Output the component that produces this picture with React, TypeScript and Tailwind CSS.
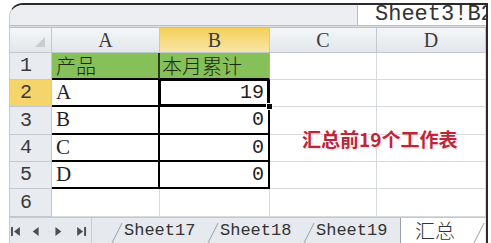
import React from "react";

const mono = { fontFamily: '"Liberation Mono", "DejaVu Sans Mono", monospace' };
const serif = { fontFamily: '"Liberation Serif", "DejaVu Serif", serif' };
const cjk = { fontFamily: '"Noto Sans CJK SC", "Noto Sans", sans-serif' };

function ColHead({ w, label, active }: { w: string; label: string; active?: boolean }) {
  return (
    <div
      className={`${w} h-full flex items-center justify-center border-r border-b border-[#c3c8d0] text-[20px] text-[#3a3a3a] ${
        active ? "bg-gradient-to-b from-[#f5cf55] to-[#f8e6a4]" : "bg-gradient-to-b from-[#f4f6f8] to-[#e3e7ec]"
      }`}
      style={serif}
    >
      {label}
    </div>
  );
}

function RowHead({ n, active }: { n: number; active?: boolean }) {
  return (
    <div
      className={`w-[42px] h-full flex items-center pl-[10px] border-r border-b border-[#c3c8d0] text-[20px] text-[#3a3a3a] ${
        active ? "bg-[#f5d46c]" : "bg-[#e8ecf1]"
      }`}
      style={mono}
    >
      {n}
    </div>
  );
}

function Slash() {
  return (
    <svg width="12" height="26" viewBox="0 0 12 26" className="shrink-0">
      <line x1="1" y1="25" x2="11" y2="5" stroke="#9aa0a8" strokeWidth="1" />
    </svg>
  );
}

export default function App() {
  const rows = [
    { n: 3, a: "B", b: "0", h: "h-[28px]" },
    { n: 4, a: "C", b: "0", h: "h-[27px]" },
    { n: 5, a: "D", b: "0", h: "h-[27px]" },
  ];
  return (
    <div className="w-[491px] h-[243px] bg-white overflow-hidden pt-[3px] pl-[9px]">
      <div className="relative w-[479px] h-[240px] border-t-2 border-r-2 border-l border-t-[#2a2a2a] border-r-[#2a2a2a] border-l-[#c8c8c8] rounded-tl-[14px] overflow-hidden bg-[#eceef1] flex flex-col">
        {/* top bar */}
        <div className="h-[20px] flex shrink-0">
          <div className="flex-1 bg-[#eceef1]" />
          <div className="w-[129px] bg-white border-l border-[#b8bcc4] overflow-hidden whitespace-nowrap pl-[17px] text-[22px] leading-[20px] text-[#333]" style={mono}>
            Sheet3!B2
          </div>
        </div>
        <div className="h-[3px] shrink-0 bg-[#dcdfe4] border-t border-b border-[#b9bec6]" />

        {/* column header */}
        <div className="h-[25px] flex shrink-0">
          <div className="w-[42px] h-full relative border-r border-b border-[#c3c8d0] bg-gradient-to-b from-[#f4f6f8] to-[#e3e7ec]">
            <svg width="10" height="10" className="absolute right-[6px] bottom-[5px]">
              <polygon points="10,0 10,10 0,10" fill="#c9ccd1" />
            </svg>
          </div>
          <ColHead w="w-[108px]" label="A" />
          <ColHead w="w-[110px]" label="B" active />
          <ColHead w="w-[107px]" label="C" />
          <ColHead w="w-[109px]" label="D" />
        </div>

        {/* row 1 */}
        <div className="h-[27px] flex shrink-0 bg-white">
          <RowHead n={1} />
          <div className="w-[108px] h-full bg-[#86c058] border-r-2 border-r-[#2a3a1e] border-b-2 border-b-black pl-[4px] flex items-center text-[20px] font-light text-[#1c2a10]" style={cjk}>
            产品
          </div>
          <div className="w-[110px] h-full bg-[#86c058] border-r border-r-[#9fb98d] border-b-2 border-b-black pl-[2px] flex items-center text-[20px] font-light text-[#1c2a10]" style={cjk}>
            本月累计
          </div>
          <div className="w-[107px] h-full border-r border-b border-[#d6d9de]" />
          <div className="w-[109px] h-full border-r border-b border-[#d6d9de]" />
        </div>

        {/* row 2 */}
        <div className="h-[27px] flex shrink-0 bg-white">
          <RowHead n={2} active />
          <div className="w-[108px] h-full border-r-2 border-r-black border-b-2 border-b-black pl-[4px] flex items-center text-[21px] text-[#222]" style={serif}>
            A
          </div>
          <div className="relative w-[110px] h-full border-r-2 border-r-black border-b-2 border-b-black pr-[4px] flex items-center justify-end text-[20px] text-[#222]" style={mono}>
            <div className="absolute inset-[1px] border border-white outline-2 outline-black pointer-events-none" />
            19
            <div className="absolute right-[-5px] bottom-[-5px] w-[7px] h-[7px] bg-black border border-white z-10" />
          </div>
          <div className="w-[107px] h-full border-r border-b border-[#d6d9de]" />
          <div className="w-[109px] h-full border-r border-b border-[#d6d9de]" />
        </div>

        {rows.map((r) => (
          <div key={r.n} className={`${r.h} flex shrink-0 bg-white`}>
            <RowHead n={r.n} />
            <div className="w-[108px] h-full border-r-2 border-r-black border-b-2 border-b-black pl-[4px] flex items-center text-[21px] text-[#222]" style={serif}>
              {r.a}
            </div>
            <div className="w-[110px] h-full border-r-2 border-r-black border-b-2 border-b-black pr-[4px] flex items-center justify-end text-[20px] text-[#222]" style={mono}>
              {r.b}
            </div>
            <div className="w-[107px] h-full border-r border-b border-[#d6d9de]" />
            <div className="w-[109px] h-full border-r border-b border-[#d6d9de]" />
          </div>
        ))}

        {/* row 6 */}
        <div className="h-[28px] flex shrink-0 bg-white">
          <RowHead n={6} />
          <div className="w-[108px] h-full border-r border-b border-[#d6d9de]" />
          <div className="w-[110px] h-full border-r border-b border-[#d6d9de]" />
          <div className="w-[107px] h-full border-r border-b border-[#d6d9de]" />
          <div className="w-[109px] h-full border-r border-b border-[#d6d9de]" />
        </div>

        {/* red annotation */}
        <div
          className="absolute left-[292px] top-[122px] text-[19px] font-bold leading-[24px] text-[#b8283a] whitespace-nowrap"
          style={{ ...cjk, textShadow: "0 0 3px #fff, 0 0 3px #fff, 1px 1px 2px #f3b0b8" }}
        >
          汇总前19个工作表
        </div>

        {/* tab bar */}
        <div className="flex-1 flex bg-[#e6e9ee] border-t border-[#c3c8d0]">
          <div className="w-[82px] h-full flex items-center border-r border-[#c9cdd4]">
            <svg width="82" height="26" viewBox="0 0 82 26">
              <g fill="#4a4f57">
                <rect x="1" y="9" width="2" height="9" />
                <polygon points="10,9 10,18 4,13.5" />
                <polygon points="29,9 29,18 23,13.5" />
                <polygon points="46,9 46,18 52,13.5" />
                <polygon points="68,9 68,18 74,13.5" />
                <rect x="75" y="9" width="2" height="9" />
              </g>
            </svg>
          </div>
          <div className="w-[19px]" />
          {["Sheet17", "Sheet18", "Sheet19"].map((s, i) => (
            <div key={s} className="flex h-full">
              <Slash />
              <div
                className={`${i === 2 ? "w-[86px] border-r border-[#9aa0a8]" : "w-[84px]"} h-full pl-[1px] pt-[2px] text-[17px] leading-[22px] text-[#333]`}
                style={mono}
              >
                {s}
              </div>
            </div>
          ))}
          <div className="w-[72px] h-full bg-white pl-[14px] text-[20px] font-light leading-[26px] text-[#333]" style={cjk}>
            汇总
          </div>
          <div className="bg-white">
            <Slash />
          </div>
        </div>
      </div>
    </div>
  );
}
